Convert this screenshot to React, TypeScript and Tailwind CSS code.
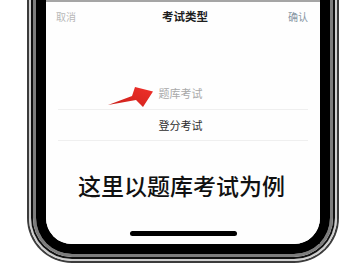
import React from "react";

const font = { fontFamily: '"Noto Sans CJK SC", "Noto Sans", sans-serif' };

export default function App() {
  return (
    <div className="w-[360px] h-[270px] overflow-hidden bg-white pl-[27px]" style={font}>
      <div className="w-[312px] h-[263px] rounded-b-[45px] border-2 border-t-0 border-[#3c3c3c]">
        <div className="h-full rounded-b-[43px] border-2 border-t-0 border-[#cfcfcf]">
          <div className="h-full rounded-b-[41px] border-2 border-t-0 border-[#111]">
            <div className="h-full rounded-b-[39px] border-[3px] border-t-0 border-[#7d7d7d]">
              <div className="h-full rounded-b-[36px] border-[10px] border-t-0 border-black">
                <div className="relative h-full rounded-b-[26px] overflow-hidden bg-[#fefefe] flex flex-col">
                  <div className="h-[2px] bg-[#a5a5a5]" />
                  <div className="h-[30px] flex items-center justify-between pl-[10px] pr-[12px]">
                    <span className="text-[10px] leading-none text-[#b8b8b8]">取消</span>
                    <span className="text-[11.5px] leading-none font-bold text-[#1e1e1e] pl-[6px]">考试类型</span>
                    <span className="text-[10px] leading-none text-[#8796a4]">确认</span>
                  </div>
                  <div className="h-[46px]" />
                  <div className="h-[31px] flex items-center justify-center pr-[5px]">
                    <span className="text-[11px] leading-none text-[#a9a9a9]">题库考试</span>
                  </div>
                  <div className="mx-[12px] h-px bg-[#efefef]" />
                  <div className="h-[30px] flex items-center justify-center pr-[5px]">
                    <span className="text-[11px] leading-none text-[#2e2e2e]">登分考试</span>
                  </div>
                  <div className="mx-[12px] h-px bg-[#efefef]" />
                  <div className="h-[29px]" />
                  <div className="h-[30px] flex items-center justify-center pr-[3px]">
                    <span className="text-[23px] leading-none font-medium text-[#111]">这里以题库考试为例</span>
                  </div>
                  <div className="h-[31px]" />
                  <div className="flex justify-center">
                    <div className="w-[107px] h-[5px] rounded-full bg-black" />
                  </div>
                  <svg
                    className="absolute left-[60px] top-[85px]"
                    width="50"
                    height="25"
                    viewBox="0 0 50 25"
                  >
                    <defs>
                      <linearGradient id="ar" x1="0" y1="1" x2="1" y2="0">
                        <stop offset="0" stopColor="#c9201a" />
                        <stop offset="1" stopColor="#f0302a" />
                      </linearGradient>
                    </defs>
                    <polygon
                      points="2,20 26,11 29,2 47,6.5 37,22 30,15"
                      fill="url(#ar)"
                    />
                  </svg>
                </div>
              </div>
            </div>
          </div>
        </div>
      </div>
    </div>
  );
}
